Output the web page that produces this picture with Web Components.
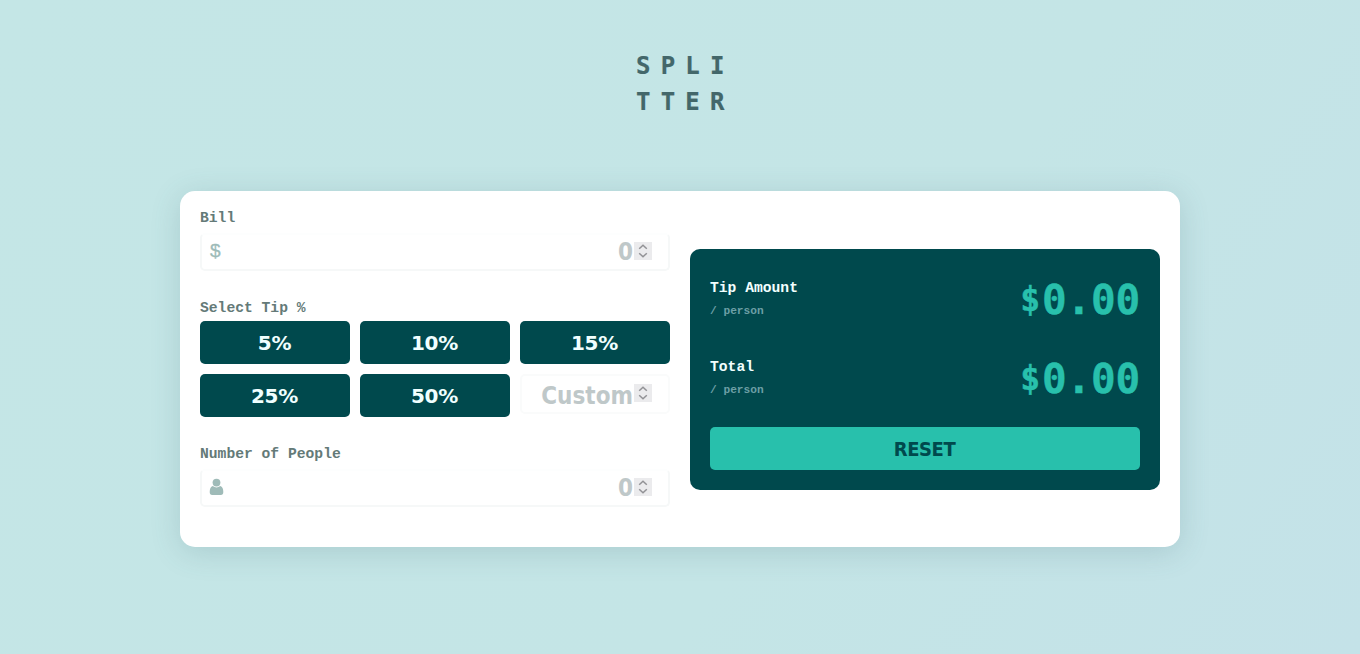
<!DOCTYPE html>
<html lang="en">
<head>
<meta charset="utf-8">
<title>Splitter</title>
<style>
body{margin:0;height:654px;overflow:hidden;background:linear-gradient(125deg,#c4e6e6 0%,#c4e5e6 62%,#c4e2e8 100%);font-family:"Liberation Mono",monospace;font-weight:700}
</style>
</head>
<body>
<splitter-app></splitter-app>
<script>
const define = (name, html) => customElements.define(name, class extends HTMLElement {
  constructor() {
    super();
    const t = document.createElement('template');
    t.innerHTML = html;
    this.attachShadow({mode: 'open'}).append(t.content.cloneNode(true));
  }
});

define('split-logo', `<style>
:host{display:block;font-family:"DejaVu Sans Mono",monospace;font-size:24px;line-height:36px;letter-spacing:10.2px;color:#43676a;width:98px;-webkit-text-stroke:.2px}
div{white-space:nowrap}
</style><div>SPLI</div><div>TTER</div>`);

define('number-spinner', `<style>
:host{display:block;width:18px;height:18px;background:#ebebed}svg{display:block}
</style><svg width="18" height="18" viewBox="0 0 18 18" fill="none" stroke="#929296" stroke-width="1.5"><path d="M5.2 6.8 9 3.2l3.8 3.6M5.2 11.2 9 14.8l3.8-3.6"/></svg>`);

define('number-field', `<style>
:host{display:flex;box-sizing:border-box;height:38px;align-items:center;justify-content:flex-end;padding:0 16px 2px 7px;border:2px solid #f6f8f8;border-top-color:#fdfefe;border-radius:5px;background:#fff;font:700 24px "DejaVu Sans Condensed","DejaVu Sans",sans-serif;font-stretch:condensed;color:#bfc8c9}
.icon{display:flex;margin-right:auto}.value{line-height:28px;padding-top:var(--value-drop,2px);padding-right:1px;margin-left:-1px}
</style><span class="icon"><slot name="icon"></slot></span><span class="value"><slot></slot></span><number-spinner></number-spinner>`);

define('field-label', `<style>
:host{display:block;font-size:14.67px;line-height:18px;color:#647a78;white-space:pre}
</style><slot></slot>`);

define('tip-button', `<style>
:host{display:block}
button{display:block;width:100%;height:43px;padding:0 1px 0 0;border:0;border-radius:5px;background:#00494d;color:#f0ffff;font:700 20px "DejaVu Sans",sans-serif;letter-spacing:-.3px}
</style><button><slot></slot></button>`);

define('reset-button', `<style>
:host{display:block}
button{display:block;width:100%;height:43px;padding:1px 1px 0 0;border:0;border-radius:5px;background:#28c0ac;color:#00494d;font:700 20px "DejaVu Sans Condensed","DejaVu Sans",sans-serif;font-stretch:condensed;letter-spacing:-.45px}
</style><button><slot></slot></button>`);

define('amount-row', `<style>
:host{display:flex;justify-content:space-between;height:79px}
.name{font-size:14.67px;line-height:20px;color:#f2ffff;padding-top:9px}
.per{font-size:11.2px;line-height:14px;color:#6c9fa5;margin-top:6px;white-space:pre}
.amount{display:flex;font-family:"DejaVu Sans Mono",monospace;font-size:41px;line-height:62px;letter-spacing:-.2px;color:#28c0ac;-webkit-text-stroke:.4px #28c0ac}
.sign{font-size:33px;letter-spacing:0;padding-right:2px}
</style><div><div class="name"><slot></slot></div><div class="per">/ person</div></div><div class="amount"><span class="sign">$</span><span>0.00</span></div>`);

define('bill-form', `<style>
:host{display:flex;flex-direction:column;height:316px;font-weight:700}
field-label{margin-top:-2px}
number-field{margin-top:6px}
.tip{margin-top:28px}
.tips{display:grid;grid-template-columns:repeat(3,150px);gap:10px;margin-top:4px}
.tips number-field{margin:0;height:40px;border-color:#fafbfb;--value-drop:5px}
.people{margin-top:28px}
.people + number-field{margin-top:6px}
.dollar{font:400 19px "Liberation Sans",sans-serif;color:#9dbbb8;-webkit-text-stroke:.3px #9dbbb8;padding-left:1px}
</style>
<field-label>Bill</field-label>
<number-field><span class="dollar" slot="icon">$</span>0</number-field>
<field-label class="tip">Select Tip %</field-label>
<div class="tips"><tip-button>5%</tip-button><tip-button>10%</tip-button><tip-button>15%</tip-button><tip-button>25%</tip-button><tip-button>50%</tip-button><number-field>Custom</number-field></div>
<field-label class="people">Number of People</field-label>
<number-field><svg slot="icon" width="15" height="18" viewBox="0 0 15 18" fill="#9fbbb8"><circle cx="7.5" cy="4.6" r="3.9"/><path d="M3.7 8.1Q7.5 11 11.3 8.1 14.3 9 14.3 14q0 3-2.5 3h-8.6Q.7 17 .7 14 .7 9 3.7 8.1Z"/></svg>0</number-field>`);

define('result-panel', `<style>
:host{display:block;box-sizing:border-box;height:241px;padding:20px;border-radius:10px;background:#00494d}
</style><amount-row>Tip Amount</amount-row><amount-row>Total</amount-row><reset-button>RESET</reset-button>`);

define('splitter-app', `<style>
:host{display:flex;flex-direction:column;align-items:center;padding-top:48px}
main{box-sizing:border-box;display:grid;grid-template-columns:1fr 1fr;gap:20px;align-items:center;width:1000px;height:356px;margin-top:71px;padding:20px;border-radius:15px;background:#fff;box-shadow:0 5px 30px rgba(65,105,115,.2)}
split-logo{margin-left:10px}
</style><split-logo></split-logo><main><bill-form></bill-form><result-panel></result-panel></main>`);
</script>
</body>
</html>
